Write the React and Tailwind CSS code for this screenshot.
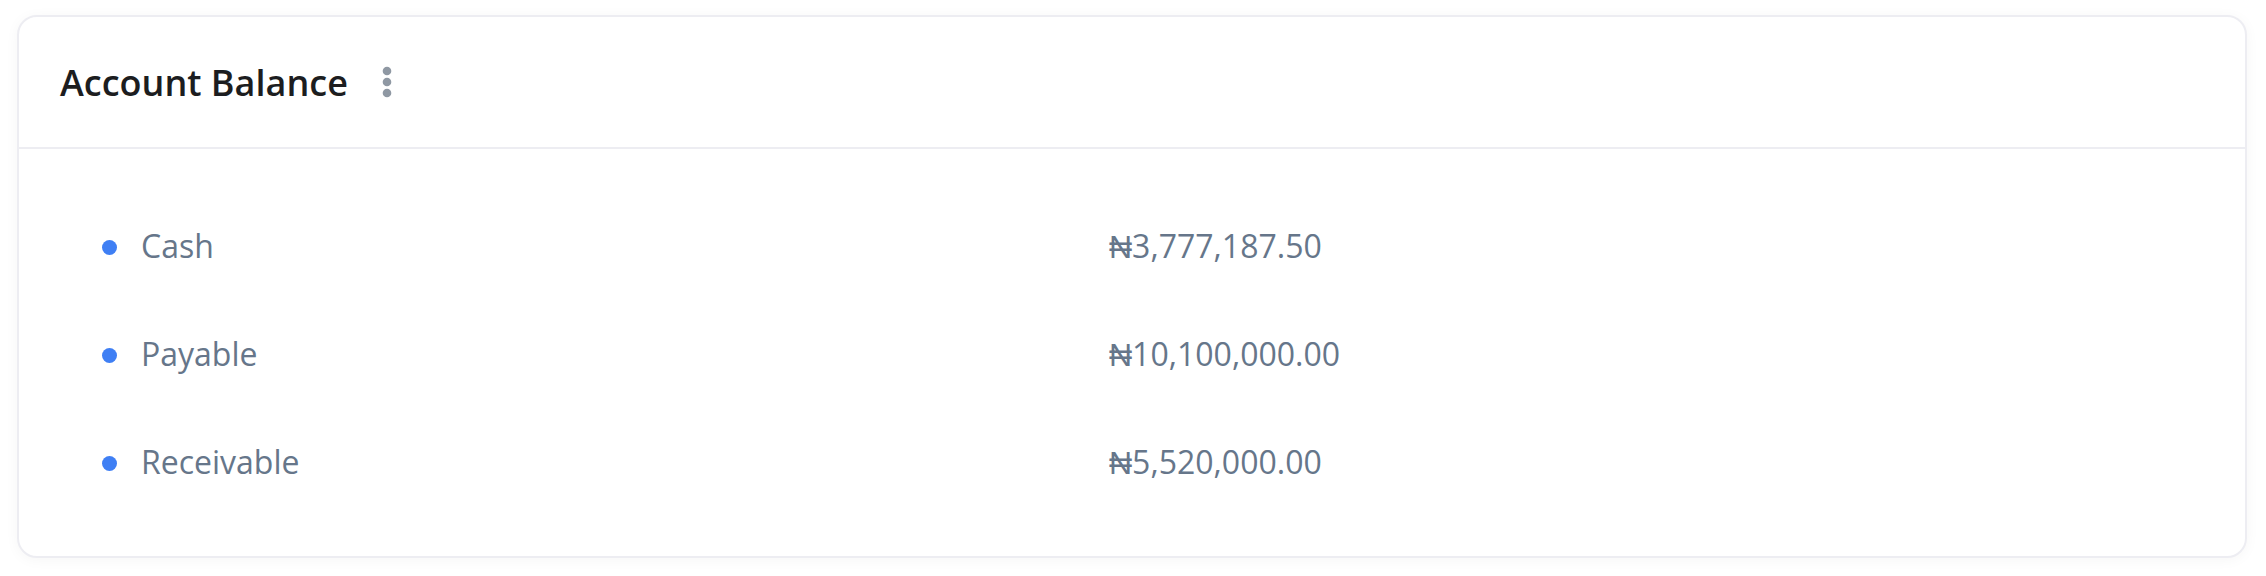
import React from 'react';

const rows = [
  { label: 'Cash', value: '₦3,777,187.50' },
  { label: 'Payable', value: '₦10,100,000.00' },
  { label: 'Receivable', value: '₦5,520,000.00' },
];

const KebabIcon = () => (
  <svg width="10" height="32" viewBox="0 0 10 32" className="text-[#8f98a3]">
    <circle cx="5" cy="5" r="4.3" fill="currentColor" />
    <circle cx="5" cy="16" r="4.3" fill="currentColor" />
    <circle cx="5" cy="27" r="4.3" fill="currentColor" />
  </svg>
);

const App = () => {
  return (
    <div className="w-full h-[576px] bg-white pl-[17px] pr-[19px] pt-[15px] font-['Open_Sans',sans-serif]">
      <div className="h-[543px] rounded-[20px] border-2 border-[#ededf2] bg-white shadow-[0_2px_14px_rgba(0,0,0,0.04)]">
        <div className="h-[132px] flex items-center px-[41px] border-b-2 border-[#ededf2]">
          <h2 className="text-[36px] font-semibold text-[#1c1d20] mt-[2px]">Account Balance</h2>
          <button className="ml-[34px] mt-[-1px] flex items-center">
            <KebabIcon />
          </button>
        </div>
        <div className="pt-[43px] pb-[40px]">
          {rows.map((r) => (
            <div key={r.label} className="h-[108px] flex items-center text-[32px] text-[#66768a]">
              <div className="w-[1090px] flex items-center pl-[83px]">
                <span className="w-[15px] h-[15px] rounded-full bg-[#3f7ff4] mt-[2px]" />
                <span className="ml-[24px]">{r.label}</span>
              </div>
              <span>{r.value}</span>
            </div>
          ))}
        </div>
      </div>
    </div>
  );
};

export default App;
